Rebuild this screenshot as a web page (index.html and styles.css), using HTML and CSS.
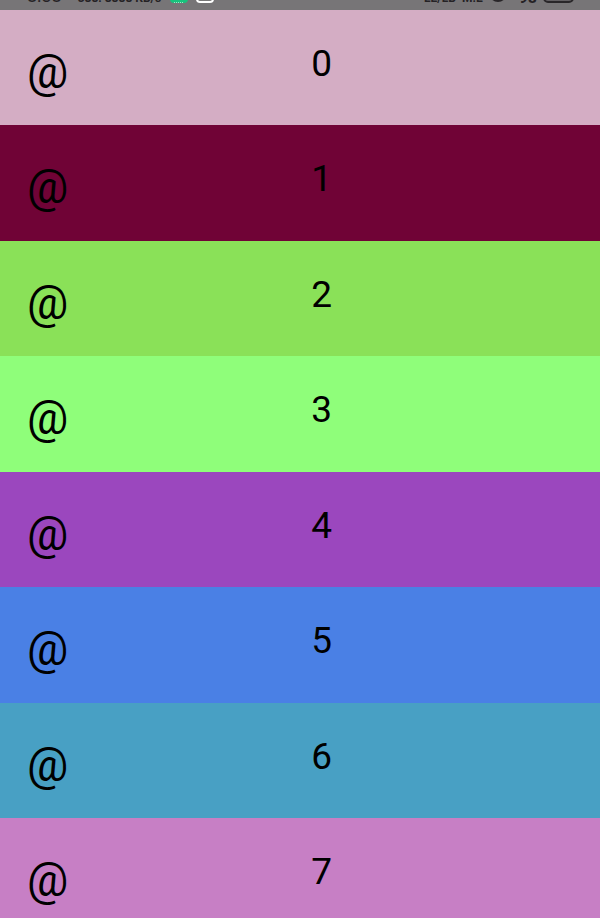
FILE: index.html
```
<!DOCTYPE html>
<html lang="en">
<head>
<meta charset="utf-8">
<meta name="viewport" content="width=device-width, initial-scale=1">
<title>List</title>
<link rel="stylesheet" href="styles.css">
</head>
<body>
<header class="status">
  <div class="group">
    <span class="time">8:38</span>
    <span class="small net">388: 8888 KB/s</span>
    <svg class="badge" width="20" height="14" viewBox="0 0 20 14"><rect x="1" y="1" width="18" height="13" rx="4" fill="#19c37d"/><path d="M5 13.5h10" stroke="#9be8c6" stroke-dasharray="1 1"/></svg>
    <svg class="badge" width="20" height="14" viewBox="0 0 20 14"><rect x="2" y="0" width="16" height="13" rx="3" fill="#777" stroke="#fff" stroke-width="2"/></svg>
  </div>
  <div class="group">
    <span class="small">LE/LB</span>
    <span class="small">M.E</span>
    <svg class="badge" width="18" height="14" viewBox="0 0 18 14"><ellipse cx="9" cy="6" rx="8" ry="7" fill="#292629"/></svg>
    <span class="small percent">98</span>
    <svg class="badge" width="32" height="14" viewBox="0 0 32 14"><rect x="1" y="0" width="29" height="13" rx="4" fill="#625f62" stroke="#292629" stroke-width="2"/></svg>
  </div>
</header>
<ul class="list">
  <li class="row pink"><span class="icon">@</span><span class="number">0</span></li>
  <li class="row maroon"><span class="icon">@</span><span class="number">1</span></li>
  <li class="row green"><span class="icon">@</span><span class="number">2</span></li>
  <li class="row mint"><span class="icon">@</span><span class="number">3</span></li>
  <li class="row purple"><span class="icon">@</span><span class="number">4</span></li>
  <li class="row blue"><span class="icon">@</span><span class="number">5</span></li>
  <li class="row teal"><span class="icon">@</span><span class="number">6</span></li>
  <li class="row orchid"><span class="icon">@</span><span class="number">7</span></li>
</ul>
</body>
</html>
```
FILE: styles.css
```
* { box-sizing: border-box; }
html { height: 100%; overflow: hidden; }
body {
  margin: 0;
  height: 100%;
  overflow: hidden;
  font-family: Roboto, sans-serif;
  color: #000;
}
.status {
  display: flex;
  justify-content: space-between;
  align-items: flex-end;
  height: 10px;
  padding: 0 25px 7px 27px;
  background: #777577;
  color: #252225;
  overflow: hidden;
}
.group {
  display: flex;
  align-items: flex-end;
  gap: 6px;
}
.time { font-size: 18px; line-height: 14px; }
.small { font-size: 12px; line-height: 10px; font-weight: 700; }
.net { margin: 0 2px 0 10px; }
.percent { margin-left: 6px; font-size: 16px; }
.badge { display: block; }
.list {
  display: grid;
  grid-auto-rows: 115px 116px;
  margin: 0;
  padding: 0;
  list-style: none;
}
.row {
  display: grid;
  grid-template-columns: 47% 1fr;
  align-items: start;
  padding: 32px 0 0 27px;
}
.icon { font-size: 46px; line-height: 60px; }
.number { padding-left: 15px; font-size: 37px; line-height: 44px; }
.pink { background: #d4adc4; }
.maroon { background: #700336; }
.green { background: #8ae158; }
.mint { background: #8ffe7a; }
.purple { background: #9b47be; }
.blue { background: #4a80e5; }
.teal { background: #48a0c4; }
.orchid { background: #c77fc5; }
```
